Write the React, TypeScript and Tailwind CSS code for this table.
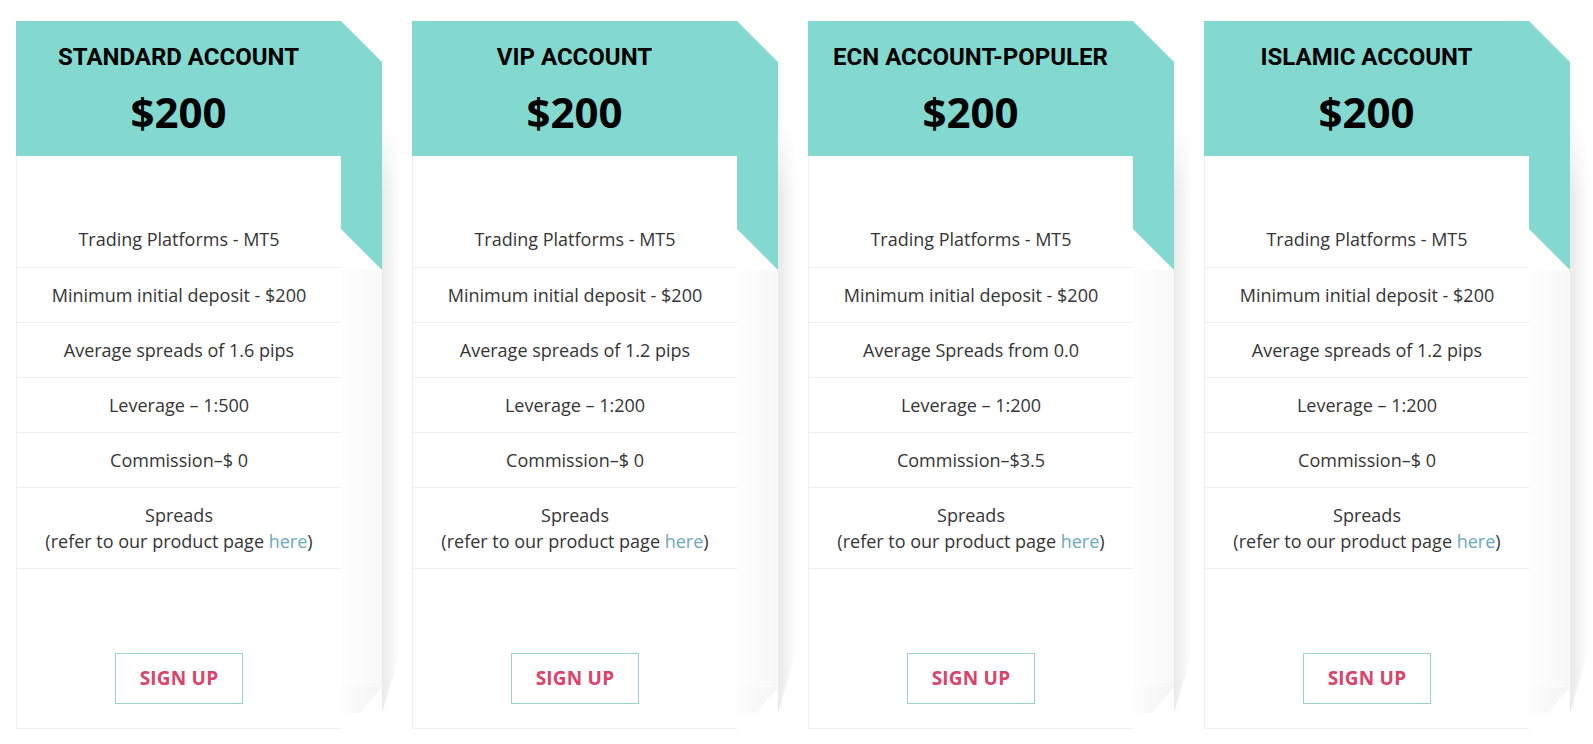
import React from 'react';

type Plan = {
  title: string;
  price: string;
  rows: string[];
};

const plans: Plan[] = [
  {
    title: 'STANDARD ACCOUNT',
    price: '$200',
    rows: ['Trading Platforms - MT5', 'Minimum initial deposit - $200', 'Average spreads of 1.6 pips', 'Leverage – 1:500', 'Commission–$ 0'],
  },
  {
    title: 'VIP ACCOUNT',
    price: '$200',
    rows: ['Trading Platforms - MT5', 'Minimum initial deposit - $200', 'Average spreads of 1.2 pips', 'Leverage – 1:200', 'Commission–$ 0'],
  },
  {
    title: 'ECN ACCOUNT-POPULER',
    price: '$200',
    rows: ['Trading Platforms - MT5', 'Minimum initial deposit - $200', 'Average Spreads from 0.0', 'Leverage – 1:200', 'Commission–$3.5'],
  },
  {
    title: 'ISLAMIC ACCOUNT',
    price: '$200',
    rows: ['Trading Platforms - MT5', 'Minimum initial deposit - $200', 'Average spreads of 1.2 pips', 'Leverage – 1:200', 'Commission–$ 0'],
  },
];

const PlanCard = ({ plan }: { plan: Plan }) => (
  <div className="flex shrink-0">
    {/* main column */}
    <div className="w-[325px] shrink-0 flex flex-col">
      <div className="h-[135px] bg-[#83d9cf] flex flex-col items-center pt-[22px]">
        <h2 className="text-[24px] leading-[28px] font-bold text-black font-['Roboto',sans-serif]">{plan.title}</h2>
        <p className="mt-[16px] text-[42px] leading-[50px] font-bold text-black font-['Open_Sans',sans-serif]">{plan.price}</p>
      </div>
      <div className="bg-white border-l border-b border-[#f0f0f0] pt-[56px] pb-[24px] flex flex-col font-['Open_Sans',sans-serif] text-[#353535] text-[18px]">
        {plan.rows.map((row, i) => (
          <div
            key={row}
            className={`h-[55px] flex items-center justify-center ${i > 0 ? 'border-t border-[#f0f0f0]' : ''}`}
          >
            {row}
          </div>
        ))}
        <div className="h-[82px] flex flex-col items-center justify-center leading-[26px] border-t border-b border-[#f0f0f0]">
          <span>Spreads</span>
          <span>
            (refer to our product page <a href="#" className="text-[#6aaac0]">here</a>)
          </span>
        </div>
        <div className="flex justify-center mt-[84px]">
          <a
            href="#"
            className="w-[128px] h-[51px] border border-[#9bd3cf] flex items-center justify-center text-[19px] font-bold text-[#d9436c] tracking-[0.2px]"
          >
            SIGN UP
          </a>
        </div>
      </div>
    </div>

    {/* folded ribbon on the right */}
    <div className="flex shrink-0">
      <div className="w-[41px] flex flex-col">
        <div className="h-[249px] bg-[#83d9cf] [clip-path:polygon(0_0,100%_41px,100%_100%,0_calc(100%-41px))]" />
        <div className="h-[417px] bg-gradient-to-r from-[#fefefe] to-[#f8f8f8]" />
        <div className="h-[26px] bg-gradient-to-r from-[#fdfdfd] to-[#f4f4f4] [clip-path:polygon(0_0,100%_0,19px_100%,0_100%)]" />
      </div>
      <div className="w-[18px] mt-[100px] h-[592px] bg-gradient-to-r from-[#e9e9e9] to-white [mask-image:linear-gradient(to_bottom,transparent,black_70px)] [clip-path:polygon(0_0,100%_0,100%_calc(100%-60px),0_100%)]" />
    </div>
  </div>
);

export default function App() {
  return (
    <div className="min-h-screen bg-white pt-[21px] pl-[16px] flex gap-[12px]">
      {plans.map((plan) => (
        <PlanCard key={plan.title} plan={plan} />
      ))}
    </div>
  );
}
